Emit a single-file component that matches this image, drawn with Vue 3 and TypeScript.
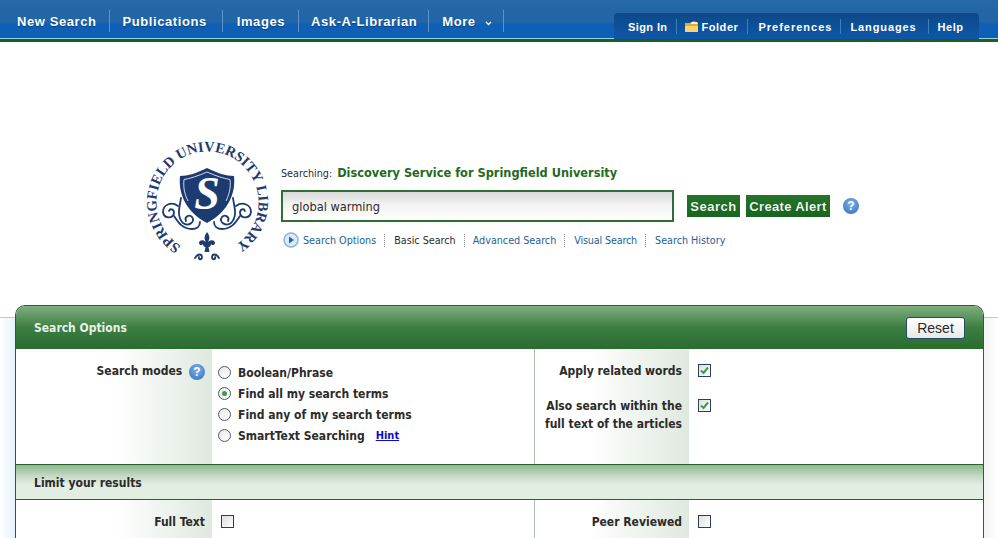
<template>
  <div class="page">
    <header class="topbar">
      <nav class="main-nav">
        <a v-for="item in mainNav" :key="item" class="main-nav__item">{{ item }}</a>
        <a class="main-nav__item">
          More
          <svg class="main-nav__caret" width="7" height="5" viewBox="0 0 7 5">
            <path d="M1 1L3.500 3.500L6 1" fill="none" stroke="#fff" stroke-width="1.300" />
          </svg>
        </a>
      </nav>
      <nav class="user-nav">
        <a class="user-nav__item user-nav__item--signin">Sign In</a>
        <a class="user-nav__item user-nav__item--folder">
          <svg class="folder" width="15" height="12" viewBox="0 0 15 12">
            <path d="M1 2h5l1 1h3l3-2 1 2v8H1z" fill="#e9ab2f" />
            <path d="M1 5h13v6H1z" fill="#f9d46f" />
            <path d="M6 2l3-1.500 4 .5 1 2H7z" fill="#fff3c9" />
          </svg>Folder
        </a>
        <a class="user-nav__item user-nav__item--prefs">Preferences</a>
        <a class="user-nav__item user-nav__item--langs">Languages</a>
        <a class="user-nav__item user-nav__item--last">Help</a>
      </nav>
    </header>

    <section class="search">
      <svg class="logo" width="125" height="125" viewBox="0 0 125 125">
        <defs>
          <path id="seal-arc" d="M36 106 A51 51 0 1 1 89 106" fill="none" />
        </defs>
        <text class="logo__text">
          <textPath href="#seal-arc" textLength="262" lengthAdjust="spacing">SPRINGFIELD UNIVERSITY LIBRARY</textPath>
        </text>
        <path d="M62 28C72 33 81 36 89 36C91 56 81 73 62 83C43 73 33 56 35 36C43 36 52 33 62 28Z" fill="#1c3b70" />
        <path d="M62 32C71 36 79 38.500 85 39.500C86 48 84 55 81 61" fill="none" stroke="#fff" stroke-width=".8" />
        <path d="M62 32C53 36 45 38.500 39 39.500C38 48 40 55 43 61" fill="none" stroke="#fff" stroke-width=".8" />
        <text class="logo__s" x="62" y="69" text-anchor="middle">S</text>
        <g fill="none" stroke="#1c3b70" stroke-width="1.800" stroke-linecap="round">
          <path d="M36 58C35 66 31 76 38 83C43 87 51 82 47 77C44 74 39 77 41 81" />
          <path d="M33 66C26 61 18 65 18 72C19 79 28 79 29 73C29 69 25 68 24 71" />
          <path d="M29 76C33 82 37 89 47 89C52 89 55 86 55 82" />
          <path d="M88 58C89 66 93 76 86 83C81 87 73 82 77 77C80 74 85 77 83 81" />
          <path d="M91 66C98 61 106 65 106 72C105 79 96 79 95 73C95 69 99 68 100 71" />
          <path d="M95 76C91 82 87 89 77 89C72 89 69 86 69 82" />
          <path d="M50 118C53 113 57 114 57 117C57 120 53 120 54 117" />
          <path d="M74 118C71 113 67 114 67 117C67 120 71 120 70 117" />
        </g>
        <path d="M62 92C65 96 65 99 63 102C66 99 70 100 70 103C70 105 67 106 66 104C66 106 65 107 63.500 107L64.500 112H59.500L60.500 107C59 107 58 106 58 104C57 106 54 105 54 103C54 100 58 99 61 102C59 99 59 96 62 92Z" fill="#1c3b70" />
      </svg>

      <div class="search__main">
        <p class="search__target">
          <span class="search__prefix">Searching:</span>
          <strong class="search__db">Discovery Service for Springfield University</strong>
        </p>
        <div class="search__row">
          <input class="search__input" value="global warming" />
          <button class="green-btn search__go">Search</button>
          <button class="green-btn search__alert">Create Alert</button>
          <span class="help search__help">?</span>
        </div>
        <div class="search__links">
          <svg class="play" width="16" height="16" viewBox="0 0 16 16">
            <circle cx="8" cy="8" r="7" fill="#dce9f7" stroke="#8db4dc" stroke-width="1.500" />
            <path d="M6 4.500L11 8L6 11.500Z" fill="#1f67a8" />
          </svg>
          <a
            v-for="link in searchLinks"
            :key="link"
            class="search__link"
            :class="{ 'search__link--active': link === 'Basic Search' }"
          >{{ link }}</a>
        </div>
      </div>
    </section>

    <main class="panel-wrap">
      <div class="panel">
        <div class="panel__head">
          <h2 class="panel__title">Search Options</h2>
          <button class="reset">Reset</button>
        </div>

        <div class="grid grid--modes">
          <div class="cell-label">
            Search modes <span class="help help--label">?</span>
          </div>
          <div class="cell-field cell-field--modes">
            <label v-for="mode in modes" :key="mode.text" class="mode">
              <span class="radio" :class="{ 'radio--on': mode.on }"></span>
              <span>{{ mode.text }}</span>
              <a v-if="mode.hint" class="mode__hint">Hint</a>
            </label>
          </div>
          <div class="cell-label cell-label--right cell-label--stack">
            <span class="stack__one">Apply related words</span>
            <span>Also search within the<br />full text of the articles</span>
          </div>
          <div class="cell-field cell-field--checks">
            <span class="check check--first">
              <svg width="11" height="11" viewBox="0 0 11 11"><path d="M2 5.500L4.500 8L9 2.500" fill="none" stroke="#3f9c45" stroke-width="2" /></svg>
            </span>
            <span class="check">
              <svg width="11" height="11" viewBox="0 0 11 11"><path d="M2 5.500L4.500 8L9 2.500" fill="none" stroke="#3f9c45" stroke-width="2" /></svg>
            </span>
          </div>
        </div>

        <h3 class="panel__sub">Limit your results</h3>

        <div class="grid grid--limits">
          <div class="cell-label">Full Text</div>
          <div class="cell-field"><span class="check"></span></div>
          <div class="cell-label cell-label--right">Peer Reviewed</div>
          <div class="cell-field"><span class="check"></span></div>
        </div>
      </div>
    </main>
  </div>
</template>

<script setup lang="ts">
interface Mode {
  text: string
  on?: boolean
  hint?: boolean
}

const mainNav = ['New Search', 'Publications', 'Images', 'Ask-A-Librarian']

const searchLinks = ['Search Options', 'Basic Search', 'Advanced Search', 'Visual Search', 'Search History']

const modes: Mode[] = [
  { text: 'Boolean/Phrase' },
  { text: 'Find all my search terms', on: true },
  { text: 'Find any of my search terms' },
  { text: 'SmartText Searching', hint: true },
]
</script>

<style>
html,
body {
  margin: 0;
  background: #fff;
  overflow: hidden;
}
</style>

<style scoped>
.page {
  width: 998px;
  height: 538px;
  overflow: hidden;
  font-family: "DejaVu Sans Condensed", "DejaVu Sans", sans-serif;
  color: #2b2b2b;
  font-size: 12px;
}

.topbar {
  height: 39px;
  display: flex;
  justify-content: space-between;
  background: linear-gradient(#2569a8 0, #2265a6 22px, #0f60b4 24px, #0d5fb8 39px);
  border-bottom: 3px solid #1e5d22;
  box-shadow: inset 0 -1px 0 #8fd5e4;
  font-family: "Liberation Sans", Arial, sans-serif;
  font-weight: bold;
  color: #fff;
}

.main-nav {
  display: flex;
  align-items: center;
  padding: 3px 0 0 4px;
}

.main-nav__item {
  height: 22px;
  line-height: 23px;
  padding: 0 12px 0 13px;
  border-right: 1px solid #5c93c9;
  font-size: 13px;
  letter-spacing: 0.58px;
  text-shadow: 0 1px 1px #0b3d72;
}

.main-nav__item:nth-child(2) {
  padding-right: 15px;
}

.main-nav__item:nth-child(3) {
  padding: 0 13px 0 14px;
}

.main-nav__item:nth-child(4) {
  padding: 0 11px 0 12px;
}

.main-nav__item:nth-child(5) {
  padding: 0 11px 0 13px;
}

.main-nav__caret {
  margin-left: 5px;
}

.user-nav {
  display: flex;
  align-items: center;
  align-self: flex-end;
  width: 365px;
  height: 26px;
  margin-right: 19px;
  padding: 1px 0 0 14px;
  box-sizing: border-box;
  border-radius: 4px 4px 0 0;
  background: linear-gradient(#0e4988, #0d57a8);
}

.user-nav__item {
  display: flex;
  align-items: center;
  height: 15px;
  padding: 0 9px 0 10px;
  border-right: 1px solid #3f7fbe;
  font-size: 11px;
  letter-spacing: 0.55px;
}

.user-nav__item--signin {
  padding-left: 0;
  letter-spacing: 0.4px;
}

.user-nav__item--folder {
  padding-left: 7px;
}

.user-nav__item--prefs {
  padding-right: 8px;
  letter-spacing: 1px;
}

.user-nav__item--langs {
  padding: 0 11px 0 9px;
  letter-spacing: 0.9px;
}

.user-nav__item--last {
  border-right: 0;
  padding: 0 0 0 9px;
}

.folder {
  margin-right: 2px;
}

.search {
  height: 263px;
  display: flex;
  padding: 98px 0 0 145px;
  box-sizing: border-box;
}

.logo {
  flex: none;
  display: block;
}

.logo__text {
  font-family: "Liberation Serif", serif;
  font-size: 14.500px;
  font-weight: bold;
  fill: #1c3b70;
}

.logo__s {
  font-family: "Liberation Serif", serif;
  font-size: 46px;
  font-weight: bold;
  font-style: italic;
  fill: #fff;
}

.search__main {
  margin-left: 11px;
  padding-top: 24px;
}

.search__target {
  margin: 0 0 8px;
  height: 18px;
  line-height: 18px;
}

.search__prefix {
  font-size: 10.700px;
  margin-right: 5px;
}

.search__db {
  font-size: 12.650px;
  color: #1f6a21;
}

.search__row {
  display: flex;
  align-items: center;
  height: 32px;
}

.search__input {
  width: 393px;
  height: 32px;
  box-sizing: border-box;
  padding: 0 9px;
  border: 2px solid #2f6e35;
  outline: none;
  background: linear-gradient(#d9d9d9, #f2f2f2 45%, #fff);
  font: 12.700px "DejaVu Sans Condensed", "DejaVu Sans", sans-serif;
  color: #2b2b2b;
}

.green-btn {
  height: 22px;
  margin: 0;
  padding: 0;
  border: 0;
  background: linear-gradient(#25752a, #1a6420);
  color: #eef6ee;
  font: bold 13px "Liberation Sans", Arial, sans-serif;
  letter-spacing: 0.35px;
  text-shadow: 0 0 1px #0d3d10;
}

.search__go {
  width: 53px;
  margin: 0 6px 0 13px;
  letter-spacing: 0.5px;
}

.search__alert {
  width: 84px;
}

.search__help {
  margin-left: 13px;
}

.help {
  display: inline-block;
  width: 16px;
  height: 16px;
  border-radius: 50%;
  background: radial-gradient(circle at 50% 35%, #7fb0e6, #2f6fbd);
  color: #fff;
  font: bold 12px/16px "Liberation Sans", Arial, sans-serif;
  text-align: center;
}

.help--label {
  margin-left: 3px;
  vertical-align: -1px;
}

.search__links {
  display: flex;
  align-items: center;
  height: 18px;
  margin-top: 9px;
  font-size: 10.700px;
}

.play {
  margin: 0 4px 0 2px;
}

.search__link {
  color: #1d5f95;
  padding: 0 8px 0 9px;
  line-height: 13px;
  border-right: 1px dotted #8a8a8a;
}

.search__link:first-of-type {
  padding-left: 0;
}

.search__link:nth-of-type(3) {
  padding-left: 8px;
}

.search__link:nth-of-type(4) {
  letter-spacing: -0.15px;
}

.search__link:last-child {
  border-right: 0;
}

.search__link--active {
  color: #2b2b2b;
}

.panel-wrap {
  padding: 0 14px 0 15px;
  height: 233px;
  background:
    linear-gradient(#bfc8cf, #bfc8cf) 0 12px / 100% 1px no-repeat,
    linear-gradient(90deg, #fff, #e6f1fc 15px, #fff 16px, #fff 983px, #f3f3f3 985px, #fff) 0 13px / 100% 100% no-repeat;
}

.panel {
  height: 100%;
  box-sizing: border-box;
  border: 1px solid #2b5e30;
  border-bottom: 0;
  border-radius: 10px 10px 0 0;
  background: #fff;
}

.panel__head {
  height: 43px;
  display: flex;
  align-items: center;
  justify-content: space-between;
  padding: 0 18px;
  border-radius: 9px 9px 0 0;
  background: linear-gradient(#7fae7f, #3d7f42 50%, #2a6c2f);
}

.panel__title {
  margin: 0;
  font-size: 12px;
  font-weight: bold;
  color: #e8f2e8;
}

.reset {
  width: 59px;
  height: 22px;
  padding: 0;
  border: 1px solid #2a4a66;
  border-radius: 3px;
  background: linear-gradient(#fff, #e8e8e8);
  font: 14px "Liberation Sans", Arial, sans-serif;
  color: #2b2b2b;
}

.grid {
  display: grid;
  grid-template-columns: 196px 322px 155px 1fr;
}

.grid--modes {
  height: 115px;
}

.grid--limits {
  height: 60px;
}

.panel__sub {
  height: 36px;
  margin: 0;
  padding: 0 18px;
  box-sizing: border-box;
  border-top: 1px solid #2b5e30;
  border-bottom: 1px solid #2b5e30;
  background: linear-gradient(#8dbb8d, #c9dcc9 35%, #e3eee3 60%);
  font-size: 12px;
  font-weight: bold;
  line-height: 36px;
}

.cell-label {
  padding: 13px 7px 0 0;
  box-sizing: border-box;
  text-align: right;
  font-weight: bold;
  font-size: 12px;
  line-height: 18px;
  background: linear-gradient(90deg, #fff 50%, #dfe9df);
}

.cell-label--right {
  border-left: 1px solid #a9c3a9;
  background: linear-gradient(90deg, #fff 35%, #dfe9df);
}

.cell-label--stack {
  display: flex;
  flex-direction: column;
}

.stack__one {
  margin-bottom: 17px;
}

.cell-field {
  padding: 15px 0 0 9px;
}

.cell-field--modes {
  padding: 13px 0 0 6px;
}

.cell-field--checks {
  display: flex;
  flex-direction: column;
}

.mode {
  display: flex;
  align-items: center;
  height: 21px;
  gap: 7px;
  font-weight: bold;
  font-size: 12px;
}

.mode__hint {
  margin-left: 4px;
  color: #0b0bd0;
  font-size: 11px;
  text-decoration: underline;
}

.radio {
  width: 13px;
  height: 13px;
  box-sizing: border-box;
  border: 1px solid #4d5a66;
  border-radius: 50%;
  background: linear-gradient(135deg, #e8e8e8, #fff);
  position: relative;
}

.radio--on::after {
  content: "";
  position: absolute;
  left: 3px;
  top: 3px;
  width: 5px;
  height: 5px;
  border-radius: 50%;
  background: #3f9c45;
}

.check {
  display: flex;
  align-items: center;
  justify-content: center;
  width: 13px;
  height: 13px;
  box-sizing: border-box;
  border: 1px solid #2a4058;
  background: linear-gradient(135deg, #dedede, #fff);
}

.check--first {
  margin-bottom: 22px;
}
</style>
